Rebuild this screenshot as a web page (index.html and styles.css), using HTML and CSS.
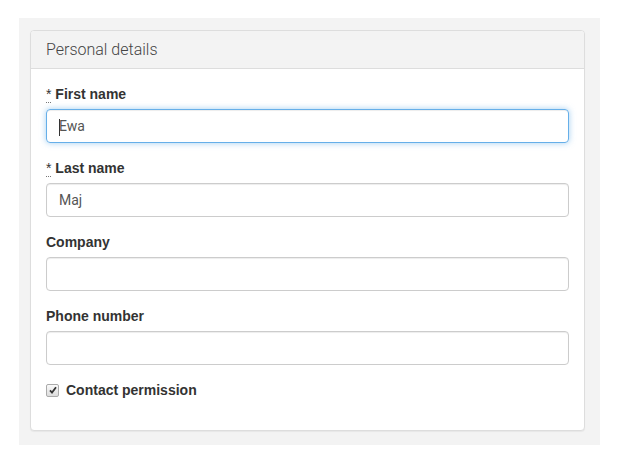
FILE: index.html
```html
<!DOCTYPE html>
<html>
<head>
<meta charset="utf-8">
<link rel="stylesheet" href="styles.css">
</head>
<body>
<div class="wrap">
  <div class="panel">
    <div class="panel-heading"><h3 class="panel-title">Personal details</h3></div>
    <div class="panel-body">
      <div class="form-group">
        <label class="label"><abbr class="req" title="required">*</abbr> First name</label>
        <div class="input focus"><span class="caret"></span>Ewa</div>
      </div>
      <div class="form-group">
        <label class="label"><abbr class="req" title="required">*</abbr> Last name</label>
        <div class="input">Maj</div>
      </div>
      <div class="form-group">
        <label class="label">Company</label>
        <div class="input"></div>
      </div>
      <div class="form-group">
        <label class="label">Phone number</label>
        <div class="input"></div>
      </div>
      <div class="checkbox">
        <span class="cb"><svg width="8" height="8" viewBox="0 0 8 8"><path d="M1 4.3 L3 6.5 L7 1.2" fill="none" stroke="#333" stroke-width="1.8"/></svg></span>
        <span class="cb-label">Contact permission</span>
      </div>
    </div>
  </div>
</div>
</body>
</html>
```
FILE: styles.css
```css
html, body { margin: 0; padding: 0; background: #fff; }
body { font-family: "Liberation Sans", Arial, sans-serif; font-size: 14px; line-height: 20px; color: #333; }
.wrap {
  margin: 18px 0 0 19px;
  width: 555px;
  padding: 12px 15px 14px 11px;
  background: #f3f3f3;
}
.panel {
  width: 553px;
  background: #fff;
  border: 1px solid #ddd;
  border-radius: 4px;
  box-shadow: 0 1px 1px rgba(0,0,0,.05);
}
.panel-heading {
  background: #f3f3f3;
  border-bottom: 1px solid #ddd;
  border-radius: 3px 3px 0 0;
  padding: 10px 15px;
}
.panel-title {
  margin: 0;
  font-family: Roboto, "Liberation Sans", sans-serif;
  font-weight: 300;
  font-size: 16px;
  line-height: 17px;
  color: #444;
}
.panel-body { padding: 15px 15px 10px; }
.form-group { margin-bottom: 15px; }
.label { display: block; font-weight: bold; margin-bottom: 5px; }
.req { text-decoration: none; border-bottom: 1px dotted #777; font-weight: normal; cursor: help; }
.input {
  height: 20px;
  padding: 6px 12px;
  border: 1px solid #ccc;
  border-radius: 4px;
  box-shadow: inset 0 1px 1px rgba(0,0,0,.075);
  font-family: Roboto, "Liberation Sans", sans-serif;
  font-size: 14px;
  line-height: 20px;
  color: #555;
  position: relative;
}
.input.focus {
  border-color: #66afe9;
  box-shadow: inset 0 1px 1px rgba(0,0,0,.075), 0 0 6px rgba(102,175,233,.6);
}
.caret {
  position: absolute;
  left: 12px;
  top: 9px;
  width: 1px;
  height: 17px;
  background: #333;
}
.checkbox { display: flex; align-items: center; height: 20px; margin-bottom: 20px; }
.cb {
  width: 11px; height: 11px;
  border: 1px solid #aaa;
  border-radius: 2px;
  background: linear-gradient(#fafafa, #dcdcdc);
  display: flex; align-items: center; justify-content: center;
  margin: 0 7px 0 0;
}
.cb svg { display: block; }
.cb-label { font-weight: bold; }
```
